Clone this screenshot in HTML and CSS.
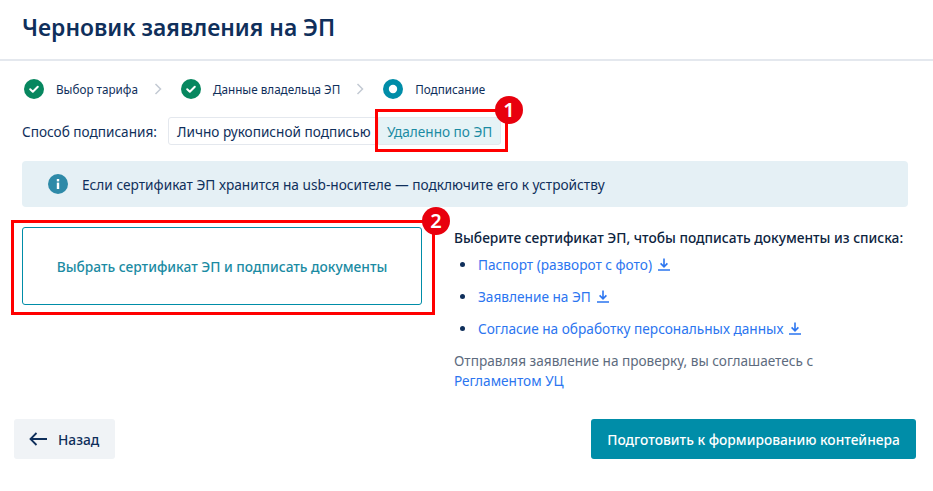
FILE: index.html
```html
<!DOCTYPE html>
<html lang="ru">
<head>
    <meta charset="UTF-8">
    <title>Черновик заявления на ЭП</title>
    <link rel="stylesheet" href="styles.css">
</head>
<body>
    <div class="page">
        <h1 class="title">Черновик заявления на ЭП</h1>

        <div class="content">
            <div class="steps">
                <div class="step">
                    <svg class="step-icon" viewBox="0 0 20 20"><circle cx="10" cy="10" r="10" fill="#07875f"/><path d="M6.2 10.2l2.6 2.5 5-5" fill="none" stroke="#fff" stroke-width="2" stroke-linecap="round" stroke-linejoin="round"/></svg>
                    <span>Выбор тарифа</span>
                </div>
                <svg class="step-arrow" viewBox="0 0 8 12"><path d="M1.5 1l5 5-5 5" fill="none" stroke="#c3cad3" stroke-width="1.5"/></svg>
                <div class="step">
                    <svg class="step-icon" viewBox="0 0 20 20"><circle cx="10" cy="10" r="10" fill="#07875f"/><path d="M6.2 10.2l2.6 2.5 5-5" fill="none" stroke="#fff" stroke-width="2" stroke-linecap="round" stroke-linejoin="round"/></svg>
                    <span>Данные владельца ЭП</span>
                </div>
                <svg class="step-arrow" viewBox="0 0 8 12"><path d="M1.5 1l5 5-5 5" fill="none" stroke="#c3cad3" stroke-width="1.5"/></svg>
                <div class="step">
                    <svg class="step-icon" viewBox="0 0 20 20"><circle cx="10" cy="10" r="10" fill="#008da8"/><circle cx="10" cy="10" r="4.2" fill="#fff"/></svg>
                    <span>Подписание</span>
                </div>
            </div>

            <div class="method">
                <span class="method-label">Способ подписания:</span>
                <div class="switch">
                    <span class="switch-item">Лично рукописной подписью</span>
                    <span class="switch-item active">Удаленно по ЭП</span>
                    <div class="mark mark-one"><b class="badge">1</b></div>
                </div>
            </div>

            <div class="alert">
                <svg class="alert-icon" viewBox="0 0 20 20"><circle cx="10" cy="10" r="10" fill="#2e8aa8"/><rect x="8.8" y="8.6" width="2.4" height="6.4" fill="#fff"/><rect x="8.8" y="5" width="2.4" height="2.4" fill="#fff"/></svg>
                <span>Если сертификат ЭП хранится на usb-носителе — подключите его к устройству</span>
            </div>

            <div class="sign">
                <div class="sign-left">
                    <button class="choose">Выбрать сертификат ЭП и подписать документы</button>
                    <div class="mark mark-two"><b class="badge">2</b></div>
                </div>
                <div class="sign-right">
                    <p class="docs-title">Выберите сертификат ЭП, чтобы подписать документы из списка:</p>
                    <ul class="docs">
                        <li><a href="#">Паспорт (разворот с фото)</a><svg class="dl" viewBox="0 0 12 13"><path d="M6 0.5v8M2.6 5.4L6 8.8l3.4-3.4M0 12h12" fill="none" stroke="#2b75f0" stroke-width="1.6"/></svg></li>
                        <li><a href="#">Заявление на ЭП</a><svg class="dl" viewBox="0 0 12 13"><path d="M6 0.5v8M2.6 5.4L6 8.8l3.4-3.4M0 12h12" fill="none" stroke="#2b75f0" stroke-width="1.6"/></svg></li>
                        <li><a href="#">Согласие на обработку персональных данных</a><svg class="dl" viewBox="0 0 12 13"><path d="M6 0.5v8M2.6 5.4L6 8.8l3.4-3.4M0 12h12" fill="none" stroke="#2b75f0" stroke-width="1.6"/></svg></li>
                    </ul>
                    <p class="note">Отправляя заявление на проверку, вы соглашаетесь с<br><a href="#">Регламентом УЦ</a></p>
                </div>
            </div>
        </div>

        <div class="footer">
            <button class="back">
                <svg class="back-icon" viewBox="0 0 18 14"><path d="M18 7H1.5M7.5 1L1.5 7l6 6" fill="none" stroke="#0f2f5b" stroke-width="1.8"/></svg>
                Назад
            </button>
            <button class="primary">Подготовить к формированию контейнера</button>
        </div>
    </div>
</body>
</html>
```

FILE: styles.css
```css
* {
    box-sizing: border-box;
}

body {
    margin: 0;
    background: #fff;
    font-family: "Noto Sans", Arial, sans-serif;
    font-size: 14px;
    color: #0f2f5b;
}

.page {
    width: 933px;
    height: 491px;
    overflow: hidden;
}

.title {
    margin: 0;
    height: 61px;
    padding: 11px 22px 0;
    border-bottom: 2px solid #e4e8ee;
    font-size: 22.85px;
    line-height: 34px;
    font-weight: 600;
    color: #0f2f5b;
}

.content {
    padding: 0 25px 0 22px;
}

.steps {
    display: flex;
    align-items: center;
    height: 20px;
    margin-top: 18px;
    padding-left: 2px;
    font-size: 11.7px;
}

.step {
    display: flex;
    align-items: center;
    gap: 12px;
}

.step-icon {
    width: 20px;
    height: 20px;
}

.step-arrow {
    width: 8px;
    height: 12px;
    margin: 0 19px 0 16px;
}

.method {
    display: flex;
    align-items: center;
    margin-top: 18px;
}

.method-label {
    width: 146px;
    font-size: 13.6px;
}

.switch {
    display: flex;
    position: relative;
    height: 28px;
}

.switch-item {
    display: flex;
    align-items: center;
    width: 210px;
    padding: 0 0 0 8px;
    border: 1px solid #e4e8ee;
    border-radius: 3px 0 0 3px;
    font-size: 13.6px;
    white-space: nowrap;
}

.switch-item.active {
    width: 123px;
    border-radius: 0 3px 3px 0;
    background: #e6f3f6;
    color: #1b8ba3;
}

.mark {
    position: absolute;
    border: 3px solid #f00;
}

.mark-one {
    left: 207px;
    top: -8px;
    width: 133px;
    height: 43px;
}

.mark-two {
    left: -11px;
    top: -7px;
    width: 424px;
    height: 95px;
}

.badge {
    position: absolute;
    right: -18px;
    top: -16px;
    width: 28px;
    height: 28px;
    border-radius: 50%;
    background: #e8000d;
    color: #fff;
    font-size: 20px;
    line-height: 28px;
    font-weight: 600;
    text-align: center;
}

.alert {
    display: flex;
    align-items: center;
    gap: 14px;
    height: 46px;
    margin-top: 16px;
    padding-left: 26px;
    border-radius: 4px;
    background: #e5f0f5;
    font-size: 13.68px;
}

.alert-icon {
    width: 20px;
    height: 20px;
}

.sign {
    display: flex;
    margin-top: 20px;
}

.sign-left {
    position: relative;
    width: 400px;
    height: 78px;
    margin-right: 32px;
}

.choose {
    width: 100%;
    height: 100%;
    border: 1px solid #008da8;
    border-radius: 3px;
    background: #fff;
    color: #1b8ba3;
    font-family: inherit;
    font-size: 13.75px;
    font-weight: 500;
}

.sign-right {
    flex: 1;
}

.docs-title {
    margin: 1px 0 0;
    font-size: 13.75px;
    line-height: 20px;
    font-weight: 500;
    white-space: nowrap;
    color: #0d2440;
}

.docs {
    margin: 6px 0 0;
    padding-left: 24px;
    list-style: none;
    font-size: 13.65px;
}

.docs li {
    position: relative;
    display: flex;
    align-items: center;
    height: 20px;
    margin-bottom: 12px;
}

.docs li:last-child {
    margin-bottom: 13px;
}

.docs li::before {
    content: "";
    position: absolute;
    left: -18px;
    top: 8px;
    width: 5px;
    height: 5px;
    border-radius: 50%;
    background: #0f2f5b;
}

a {
    color: #2b75f0;
    text-decoration: none;
}

.dl {
    width: 12px;
    height: 13px;
    margin-left: 6px;
}

.note {
    margin: 0;
    font-size: 13.6px;
    line-height: 20px;
    color: #5d6b7e;
}

.footer {
    display: flex;
    justify-content: space-between;
    padding: 0 17px 0 14px;
    position: absolute;
    top: 419px;
    left: 0;
    width: 933px;
}

.back,
.primary {
    display: flex;
    align-items: center;
    height: 40px;
    border: 0;
    border-radius: 3px;
    font-family: inherit;
    font-size: 13.75px;
    font-weight: 500;
}

.back {
    gap: 11px;
    width: 101px;
    padding: 0 0 0 15px;
    background: #f0f3f6;
    color: #0f2f5b;
}

.back-icon {
    width: 18px;
    height: 14px;
}

.primary {
    justify-content: center;
    width: 325px;
    background: #008da8;
    color: #fff;
}
```
